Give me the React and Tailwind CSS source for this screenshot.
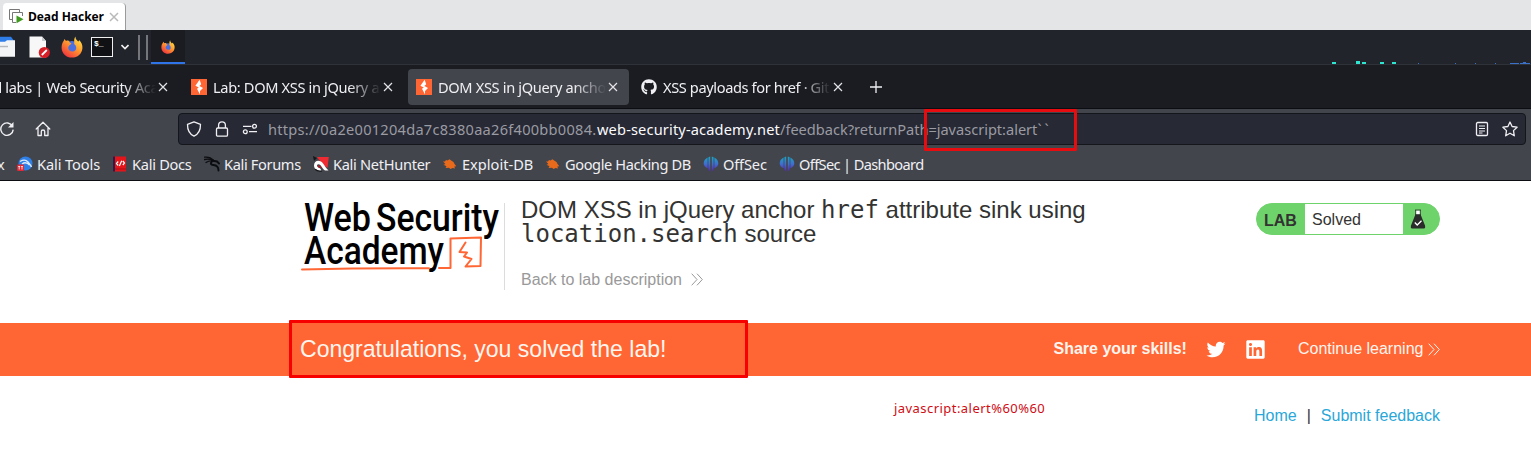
import React from "react";
import { FaTwitter, FaLinkedin, FaGithub } from "react-icons/fa";

const noto = "font-['Noto_Sans',sans-serif]";
const arial = "font-['Liberation_Sans',sans-serif]";

function Bolt({ className }) {
  return (
    <svg viewBox="0 0 16 16" className={className}>
      <rect width="16" height="16" fill="#ff6633" />
      <path d="M8.6 0.8 4.4 6.8 7.8 8.6 6 9.8 9 15.4V11.9L12 9.1 8.4 6.9 10.2 5.3Z" fill="#fff" />
    </svg>
  );
}

function Firefox({ id, className }) {
  return (
    <svg viewBox="0 0 22 22" className={className}>
      <defs>
        <linearGradient id={id} x1="0.85" y1="0.05" x2="0.2" y2="0.95">
          <stop offset="0" stopColor="#ffe04a" />
          <stop offset="0.45" stopColor="#ff9a2e" />
          <stop offset="1" stopColor="#f0343f" />
        </linearGradient>
      </defs>
      <circle cx="11" cy="11.5" r="6.5" fill="#4a6fe0" />
      <path
        d="M14.5 0.5C14.2 3 16 4 17.2 5.6C18 5 18 4.400 18 4C20.500 6.300 21.700 9 21.400 12.200C21 17.800 16.500 21.600 11 21.600C5 21.600 0.600 17.200 0.600 11.700C0.600 8.500 1.500 6.500 2.800 4.800L3.400 2.900C4 3.400 4.600 4.200 5 5C6.500 4.300 7.500 4.600 8.500 5C8 5.800 8.300 6.500 10.500 7.600C9.800 9 8.300 8.700 8 10C6.500 10.800 7 15.500 11.500 15.500C14.500 15.500 15.800 13 15 10.500C14.600 9.200 14 8.600 13 8C14 7.500 12 4 14.500 0.500Z"
        fill={`url(#${id})`}
      />
    </svg>
  );
}

function Close() {
  return (
    <svg viewBox="0 0 10 10" className="h-[10px] w-[10px] shrink-0" stroke="#e4e4e8" strokeWidth="1.2" fill="none">
      <path d="M1 1 9 9M9 1 1 9" />
    </svg>
  );
}

function DoubleChevron({ className }) {
  return (
    <svg viewBox="0 0 12 13" className={className} fill="none" stroke="currentColor" strokeWidth="1">
      <path d="M.7.7 6 6.500.7 12.300M6 .7 11.300 6.500 6 12.300" />
    </svg>
  );
}

function WindowTab() {
  return (
    <div className="flex h-[30px] bg-[#e4e5e7] pl-[3px] pt-[3px]">
      <div className="flex h-[27px] w-[123px] items-center rounded-t-[4px] border-r border-[#9a9a9a] bg-white pl-[6px]">
        <svg viewBox="0 0 15 15" className="h-[15px] w-[15px] shrink-0" fill="none">
          <path d="M4 10.500H.5V.5H10.500V3" stroke="#777" />
          <path d="M7 13.500H3.500V3.500H13.500V7" stroke="#777" />
          <path d="M7.500 6.500 14.500 10.300 7.500 14.200Z" fill="#3f9a1f" />
        </svg>
        <span className="ml-[4px] w-[73px] shrink-0 whitespace-nowrap font-['Open_Sans',sans-serif] text-[12px] font-bold leading-[16px] tracking-[-0.05px] text-black">
          Dead Hacker
        </span>
        <svg viewBox="0 0 10 10" className="ml-[8px] h-[10px] w-[10px]" stroke="#b9b9b9" strokeWidth="1.5">
          <path d="M1 1 9 9M9 1 1 9" />
        </svg>
      </div>
    </div>
  );
}

function Panel() {
  return (
    <div className="flex h-[35px] items-start border-b border-[#30323a] bg-[#22242c]">
      <svg viewBox="0 0 15 35" className="h-[34px] w-[15px] shrink-0" preserveAspectRatio="none">
        <path d="M0 7H11L14 11V20H0Z" fill="#2f7de8" />
        <path d="M0 12H5L7 10.500H15V27.500H0Z" fill="#f3f4f6" />
        <path d="M0 17H8" stroke="#b5b8bd" strokeWidth="1.500" />
      </svg>
      <svg viewBox="0 0 22 24" className="ml-[14px] mt-[5px] h-[24px] w-[22px] shrink-0">
        <path d="M.5 1.500H13L17 6V22.500H.5Z" fill="#f7f7f7" />
        <path d="M13 1.500V6H17Z" fill="#c5c8cc" />
        <circle cx="15.300" cy="17.500" r="5.600" fill="#d61f26" />
        <path d="M12.800 20 17.800 15" stroke="#fff" strokeWidth="1.800" />
      </svg>
      <Firefox id="fxLarge" className="ml-[10px] mt-[6px] h-[22px] w-[22px] shrink-0" />
      <div className="ml-[8px] mt-[7px] flex h-[20px] w-[22px] shrink-0 border border-[#f0f0f0] bg-[#101114] pl-[2px] pt-[1px] font-['Liberation_Mono',monospace] text-[8px] font-bold leading-[9px] text-white">
        $_
      </div>
      <svg viewBox="0 0 8 6" className="ml-[8px] mt-[14px] h-[6px] w-[8px] shrink-0" fill="none" stroke="#f2f2f2" strokeWidth="1.600">
        <path d="M.5 1 4 4.500 7.500 1" />
      </svg>
      <div className="ml-[9px] mt-[5px] h-[25px] w-[10px] shrink-0 border-x-2 border-[#74767c]" />
      <div className="ml-[3px] flex h-[34px] w-[34px] shrink-0 justify-center border-b-2 border-[#2f74e8] bg-[#1a1c21] pt-[10px]">
        <Firefox id="fxSmall" className="h-[14px] w-[14px]" />
      </div>
      <svg viewBox="0 0 200 6" className="ml-auto mt-[28px] h-[6px] w-[200px]">
        <g fill="#2fe5cf">
          <rect x="1" y="4" width="4" height="2" />
          <rect x="25" y="3" width="4" height="3" />
          <rect x="31" y="4" width="4" height="2" />
          <rect x="49" y="4" width="4" height="2" />
          <rect x="61" y="4" width="4" height="2" />
        </g>
        <g fill="#3b70c8">
          <rect x="87" y="5" width="1" height="1" />
          <rect x="124" y="5" width="1" height="1" />
          <rect x="144" y="5" width="1" height="1" />
          <rect x="164" y="5" width="1" height="1" />
          <rect x="179" y="5" width="9" height="1" />
          <rect x="189" y="5" width="10" height="1" />
          <rect x="192" y="4" width="3" height="1" />
        </g>
      </svg>
    </div>
  );
}

const fade = "overflow-hidden whitespace-nowrap shrink-0 [mask-image:linear-gradient(to_left,transparent,black_32px)]";

function Tabs() {
  return (
    <div className={`${noto} flex h-[43px] items-start bg-[#1b1c21] pt-[4px] text-[14.600px] leading-[20px] text-[#f0f0f4]`}>
      <div className="flex h-[36px] w-[183px] shrink-0 items-center">
        <div className={`${fade} w-[156px]`}>
          <span className="ml-[-14px] tracking-[-0.34px]">All labs | Web Security Academy</span>
        </div>
        <div className="ml-[2px] flex">
          <Close />
        </div>
      </div>
      <div className="flex h-[36px] w-[225px] shrink-0 items-center pl-[8px]">
        <Bolt className="h-[16px] w-[16px] shrink-0" />
        <div className={`${fade} ml-[6px] w-[168px]`}>
          <span className="tracking-[-0.34px]">Lab: DOM XSS in jQuery anchor</span>
        </div>
        <div className="ml-[2px] flex">
          <Close />
        </div>
      </div>
      <div className="flex h-[36px] w-[221px] shrink-0 items-center rounded-[4px] bg-[#42454c] pl-[8px]">
        <Bolt className="h-[16px] w-[16px] shrink-0" />
        <div className={`${fade} ml-[6px] w-[168px]`}>
          <span className="tracking-[-0.34px]">DOM XSS in jQuery anchor</span>
        </div>
        <div className="ml-[2px] flex">
          <Close />
        </div>
      </div>
      <div className="flex h-[36px] w-[229px] shrink-0 items-center pl-[12px]">
        <FaGithub className="h-[16px] w-[16px] shrink-0" />
        <div className={`${fade} ml-[6px] w-[168px]`}>
          <span className="tracking-[-0.38px]">XSS payloads for href · GitHub</span>
        </div>
        <div className="ml-[2px] flex">
          <Close />
        </div>
      </div>
      <svg viewBox="0 0 12 12" className="ml-[12px] mt-[12px] h-[12px] w-[12px]" stroke="#f0f0f4" strokeWidth="1.300">
        <path d="M6 0V12M0 6H12" />
      </svg>
    </div>
  );
}

function AddressRow() {
  return (
    <div className="flex h-[38px] items-center">
      <svg viewBox="0 0 16 16" className="h-[16px] w-[16px] shrink-0 ml-[-1px]" fill="none" stroke="#f0f0f4" strokeWidth="1.400">
        <path d="M13.500 5.200A6.200 6.200 0 1 0 14.200 8.600" />
        <path d="M14.500 1V6.500H9Z" fill="#f0f0f4" stroke="none" />
      </svg>
      <svg viewBox="0 0 16 16" className="ml-[20px] h-[16px] w-[16px] shrink-0" fill="none" stroke="#f0f0f4" strokeWidth="1.300" strokeLinejoin="round" strokeLinecap="round">
        <path d="M1.200 8 8 1.300 14.800 8M3 6.800V14.500H6.300V10.500Q6.300 9 8 9T9.700 10.500V14.500H13V6.800" />
      </svg>
      <div className="ml-[127px] flex h-[32px] w-[1348px] shrink-0 items-center rounded-[4px] border border-[#15161c] bg-[#272934]">
        <svg viewBox="0 0 16 16" className="ml-[7px] h-[16px] w-[16px] shrink-0" fill="none" stroke="#f0f0f4" strokeWidth="1.300" strokeLinejoin="round">
          <path d="M8 .8 14.500 3.300C14.600 8.500 12.800 13 8 15.200C3.200 13 1.400 8.500 1.500 3.300Z" />
        </svg>
        <svg viewBox="0 0 16 16" className="ml-[12px] h-[16px] w-[16px] shrink-0" fill="none" stroke="#f0f0f4" strokeWidth="1.300">
          <rect x="2.500" y="7" width="11" height="8.200" rx="1.200" />
          <path d="M4.600 7V4.200A3.400 3.400 0 0 1 11.400 4.200V7" />
        </svg>
        <svg viewBox="0 0 16 16" className="ml-[12px] h-[16px] w-[16px] shrink-0" fill="none" stroke="#f0f0f4" strokeWidth="1.300">
          <path d="M1 5.300H9.500M7 10.700H15" />
          <circle cx="12.500" cy="5.300" r="1.900" />
          <circle cx="3.300" cy="10.700" r="1.900" />
        </svg>
        <div className={`${noto} ml-[10px] flex whitespace-pre text-[14.600px] leading-[20px] text-[#9a9ba3]`}>
          <span className="w-[329px] shrink-0 tracking-[0.26px]">https://0a2e001204da7c8380aa26f400bb0084.</span>
          <span className="w-[183px] shrink-0 tracking-[0.15px] text-[#fbfbfe]">web-security-academy.net</span>
          <span className="tracking-[-0.02px]">
            /feedback?returnPath=javascript:alert<span className="tracking-[3px]">``</span>
          </span>
        </div>
        <svg viewBox="0 0 16 16" className="ml-auto h-[16px] w-[16px] shrink-0" fill="none" stroke="#f0f0f4" strokeWidth="1.300">
          <rect x="2.500" y="1.500" width="11" height="13" rx="1.200" />
          <path d="M5 5H11M5 7.500H11M5 10H11M5 12H8.500" strokeWidth="1.100" />
        </svg>
        <svg viewBox="0 0 16 16" className="ml-[12px] mr-[7px] h-[16px] w-[16px] shrink-0" fill="none" stroke="#f0f0f4" strokeWidth="1.300" strokeLinejoin="round">
          <path d="M8 1 10.100 5.500 15.100 6.200 11.500 9.600 12.300 14.800 8 12.200 3.700 14.800 4.500 9.600 .9 6.200 5.900 5.500Z" />
        </svg>
      </div>
    </div>
  );
}

function KaliTools() {
  return (
    <svg viewBox="0 0 16 16" className="h-[16px] w-[16px] shrink-0">
      <circle cx="8.500" cy="7.500" r="7" fill="#2f7fe6" />
      <path d="M3 5.500Q8 2.500 11 6T14.500 11M5 8Q9 5 12.500 9" stroke="#dcebff" strokeWidth="1.300" fill="none" />
      <rect x="0" y="8.500" width="7" height="6.500" rx="1" fill="#e02836" />
      <path d="M1.200 10.500H3.200M2.200 10.500V13.500M4 10.500H6M5 10.500V13.500" stroke="#fff" strokeWidth=".8" />
    </svg>
  );
}

function KaliDocs() {
  return (
    <svg viewBox="0 0 16 16" className="h-[16px] w-[16px] shrink-0">
      <rect x="1" y=".5" width="13" height="15" fill="#e3151a" />
      <path d="M1 .5H3V15.500H1Z" fill="#271c4a" />
      <path d="M6.200 5.500 4.500 7.500 6.200 9.500M10.800 5 12.500 7 10.800 9M9.700 4.800 7.400 10" stroke="#fff" strokeWidth="1.200" fill="none" />
      <path d="M3 13H14" stroke="#a80f14" />
    </svg>
  );
}

function KaliDragon() {
  return (
    <svg viewBox="0 0 16 16" className="h-[16px] w-[16px] shrink-0" fill="none" stroke="#0c0d10" strokeLinecap="round">
      <path d="M.5 1.200Q6 .5 9.500 4.300M.5 3.500Q5 2.500 9 4.500M2 6.500Q5 4.500 9 5" strokeWidth="1.300" />
      <path d="M9 4.500Q4.500 8.500 9.500 9T14.500 14.500M9 4.800 13 5.500 15 7.500" strokeWidth="1.900" />
    </svg>
  );
}

function NetHunter() {
  return (
    <svg viewBox="0 0 16 16" className="h-[16px] w-[16px] shrink-0">
      <path d="M4 1H15.800L14.500 12 9 8Z" fill="#ee2b32" />
      <path d="M0 0 4 2 1 5Z" fill="#15161a" />
      <path d="M1 9.500C1 5 5 3.500 8 5.500S11.500 10.500 15.500 14.500L12 14.500C9 12.500 8 8 5.500 8.200S3.800 11.500 7 12.200L8.500 14.500C4 15 1 13 1 9.500Z" fill="#fff" />
      <path d="M5 9.300Q7 8.800 8.300 12Q5 12.300 5 9.300Z" fill="#c3101c" />
      <path d="M2 13.300Q5 16 9 15" stroke="#15161a" strokeWidth="1.200" fill="none" />
    </svg>
  );
}

function Bug() {
  return (
    <svg viewBox="0 0 16 16" className="h-[16px] w-[16px] shrink-0">
      <path d="M1 5.500 3 5.500 4 4 5.500 4.600 7.500 3.300 9.500 4.800 11.500 6 12.500 8 14.300 10.300 12.300 10.500 13 12.500 10.500 12 8.500 13 7 11.800 3.500 12 4.500 10.300 1.500 8.800 3.500 8Z" fill="#ea6a1c" />
    </svg>
  );
}

function OffSec({ id }) {
  return (
    <svg viewBox="0 0 16 16" className="h-[16px] w-[16px] shrink-0">
      <defs>
        <linearGradient id={id} x1="0" y1="0" x2="0" y2="1">
          <stop offset="0" stopColor="#19a7c4" />
          <stop offset="0.500" stopColor="#3f6fd0" />
          <stop offset="1" stopColor="#5a22b8" />
        </linearGradient>
      </defs>
      <path
        d="M7.200 .5V15.500C5.800 14.500 5.500 13 5.400 12V1.200ZM4.600 1.500V12.300C1.500 11 .7 9 .7 7.200S2 2.700 4.600 1.500ZM8.800 .5V15.500C10.200 14.500 10.500 13 10.600 12V1.200ZM11.400 1.500V12.300C14.500 11 15.300 9 15.300 7.200S14 2.700 11.400 1.500Z"
        fill={`url(#${id})`}
      />
    </svg>
  );
}

function Bookmark({ className, icon, children }) {
  return (
    <div className={`${className} flex shrink-0 items-center whitespace-nowrap`}>
      {icon}
      <span className="ml-[4px]">{children}</span>
    </div>
  );
}

function Bookmarks() {
  return (
    <div className={`${noto} flex h-[32px] items-center text-[14.600px] leading-[20px] text-[#f0f0f4]`}>
      <span className="ml-[-3px] w-[20px] shrink-0">x</span>
      <Bookmark className="w-[95px] tracking-[-0.1px]" icon={<KaliTools />}>Kali Tools</Bookmark>
      <Bookmark className="w-[92px] tracking-[-0.28px]" icon={<KaliDocs />}>Kali Docs</Bookmark>
      <Bookmark className="w-[109px] tracking-[-0.35px]" icon={<KaliDragon />}>Kali Forums</Bookmark>
      <Bookmark className="w-[129px] tracking-[-0.3px]" icon={<NetHunter />}>Kali NetHunter</Bookmark>
      <Bookmark className="w-[103px]" icon={<Bug />}>Exploit-DB</Bookmark>
      <Bookmark className="w-[158px] tracking-[-0.4px]" icon={<Bug />}>Google Hacking DB</Bookmark>
      <Bookmark className="w-[76px] tracking-[-0.15px]" icon={<OffSec id="offsecA" />}>OffSec</Bookmark>
      <Bookmark className="w-[160px] tracking-[-0.63px]" icon={<OffSec id="offsecB" />}>OffSec | Dashboard</Bookmark>
    </div>
  );
}

function AcademyLogo() {
  return (
    <svg viewBox="0 0 200 76" className="h-[76px] w-[200px] shrink-0">
      <g fontFamily="Roboto, sans-serif" fontWeight="500" fontSize="38" fill="#000">
        <text x="3" y="31" textLength="67" lengthAdjust="spacingAndGlyphs">Web</text>
        <text x="75" y="31" textLength="123" lengthAdjust="spacingAndGlyphs">Security</text>
        <text x="3" y="63.500" textLength="140" lengthAdjust="spacingAndGlyphs">Academy</text>
      </g>
      <g fill="none" stroke="#ff6633" strokeWidth="2" strokeLinejoin="round" strokeLinecap="round">
        <path d="M1 69.500 Q60 68 128 68.300 M138 68 H149.500 V38.500 L180 37.500 L179.500 66 L164.500 66.500 L170.500 59 L163 56.500 L166 52.500 L158.500 52 L164.500 42.500" />
      </g>
    </svg>
  );
}

function LabStatus() {
  return (
    <div className={`${arial} flex h-[32px] w-[184px] shrink-0 overflow-hidden rounded-full border border-[#6fd36c] bg-[#6fd36c] text-[16px] leading-[30px] text-[#333332]`}>
      <div className="w-[48px] pl-[7px] pt-[2px] font-bold">LAB</div>
      <div className="w-[98px] bg-white pl-[7px] pt-px">Solved</div>
      <svg viewBox="0 0 16 20" className="ml-[7px] mt-[5px] h-[20px] w-[16px]">
        <path d="M5.800 4.500 1 16.500Q.3 19.300 2 19.500H14Q15.700 19.300 15 16.500L10.200 4.500Z" fill="#2b2b2b" />
        <rect x="6" y="1.500" width="4" height="3.700" fill="#fff" />
        <path d="M5 1H11M5.700 1V6M10.300 1V6" stroke="#2b2b2b" strokeWidth=".8" />
        <path d="M4.800 13.500 7.200 16 11.500 11.800" stroke="#fff" strokeWidth="1.300" fill="none" />
      </svg>
    </div>
  );
}

export default function App() {
  return (
    <div className="relative flex h-[468px] w-[1531px] flex-col overflow-hidden bg-white">
      <WindowTab />
      <Panel />
      <Tabs />
      <div className="h-[73px] border-b border-t border-b-[#0c0d12] border-t-[#0c0d12] bg-[#42454c] pt-px">
        <AddressRow />
        <Bookmarks />
      </div>

      <header className={`${arial} flex h-[142px] shrink-0 items-start pl-[301px]`}>
        <div className="mt-[19px] flex">
          <AcademyLogo />
        </div>
        <div className="ml-[3px] mt-[22px] h-[87px] w-px bg-[#dcdcdc]" />
        <div className="ml-[16px] mt-[17px] w-[600px] shrink-0 text-[#333332]">
          <h1 className="text-[24px] leading-[24px]">
            DOM XSS in jQuery anchor <code className="font-['DejaVu_Sans_Mono',monospace] leading-none">href</code> attribute sink using
            <br />
            <code className="font-['DejaVu_Sans_Mono',monospace] leading-none">location.search</code> source
          </h1>
          <div className="mt-[24px] flex items-center text-[16px] leading-[20px] text-[#999]">
            Back to lab description
            <DoubleChevron className="mb-px ml-[9px] h-[13px] w-[12px]" />
          </div>
        </div>
        <div className="ml-[135px] mt-[22px] flex">
          <LabStatus />
        </div>
      </header>

      <section className={`${arial} flex h-[53px] shrink-0 items-center bg-[#ff6633] pb-px pl-[300px] text-[16px] text-[#fff5ef]`}>
        <p className="w-[753.500px] text-[23.050px] leading-[28px]">Congratulations, you solved the lab!</p>
        <span className="w-[152px] pb-px font-bold">Share your skills!</span>
        <FaTwitter className="h-[19px] w-[20px] text-white" />
        <FaLinkedin className="ml-[19px] h-[21px] w-[21px] text-white" />
        <span className="ml-[32.500px]">Continue learning</span>
        <DoubleChevron className="ml-[5px] h-[13px] w-[12px]" />
      </section>

      <nav className={`${arial} flex h-[79px] shrink-0 justify-end pr-[91px] text-[16px] leading-[20px] text-[#29a7d9]`}>
        <span className="mt-[30px]">Home</span>
        <span className="mx-[10px] mt-[30px] text-[#333332]">|</span>
        <span className="mt-[30px]">Submit feedback</span>
      </nav>

      <div className="absolute left-[924px] top-[109px] h-[42px] w-[153px] rounded-[1px] border-[3px] border-[#e60c10]" />
      <div className="absolute left-[289px] top-[320px] h-[58px] w-[459px] rounded-[1px] border-[3px] border-[#f60000]" />
      <div className={`${noto} absolute left-[894px] top-[399px] whitespace-nowrap text-[13px] leading-[18px] tracking-[0.45px] text-[#d00c14]`}>
        javascript:alert%60%60
      </div>
    </div>
  );
}
